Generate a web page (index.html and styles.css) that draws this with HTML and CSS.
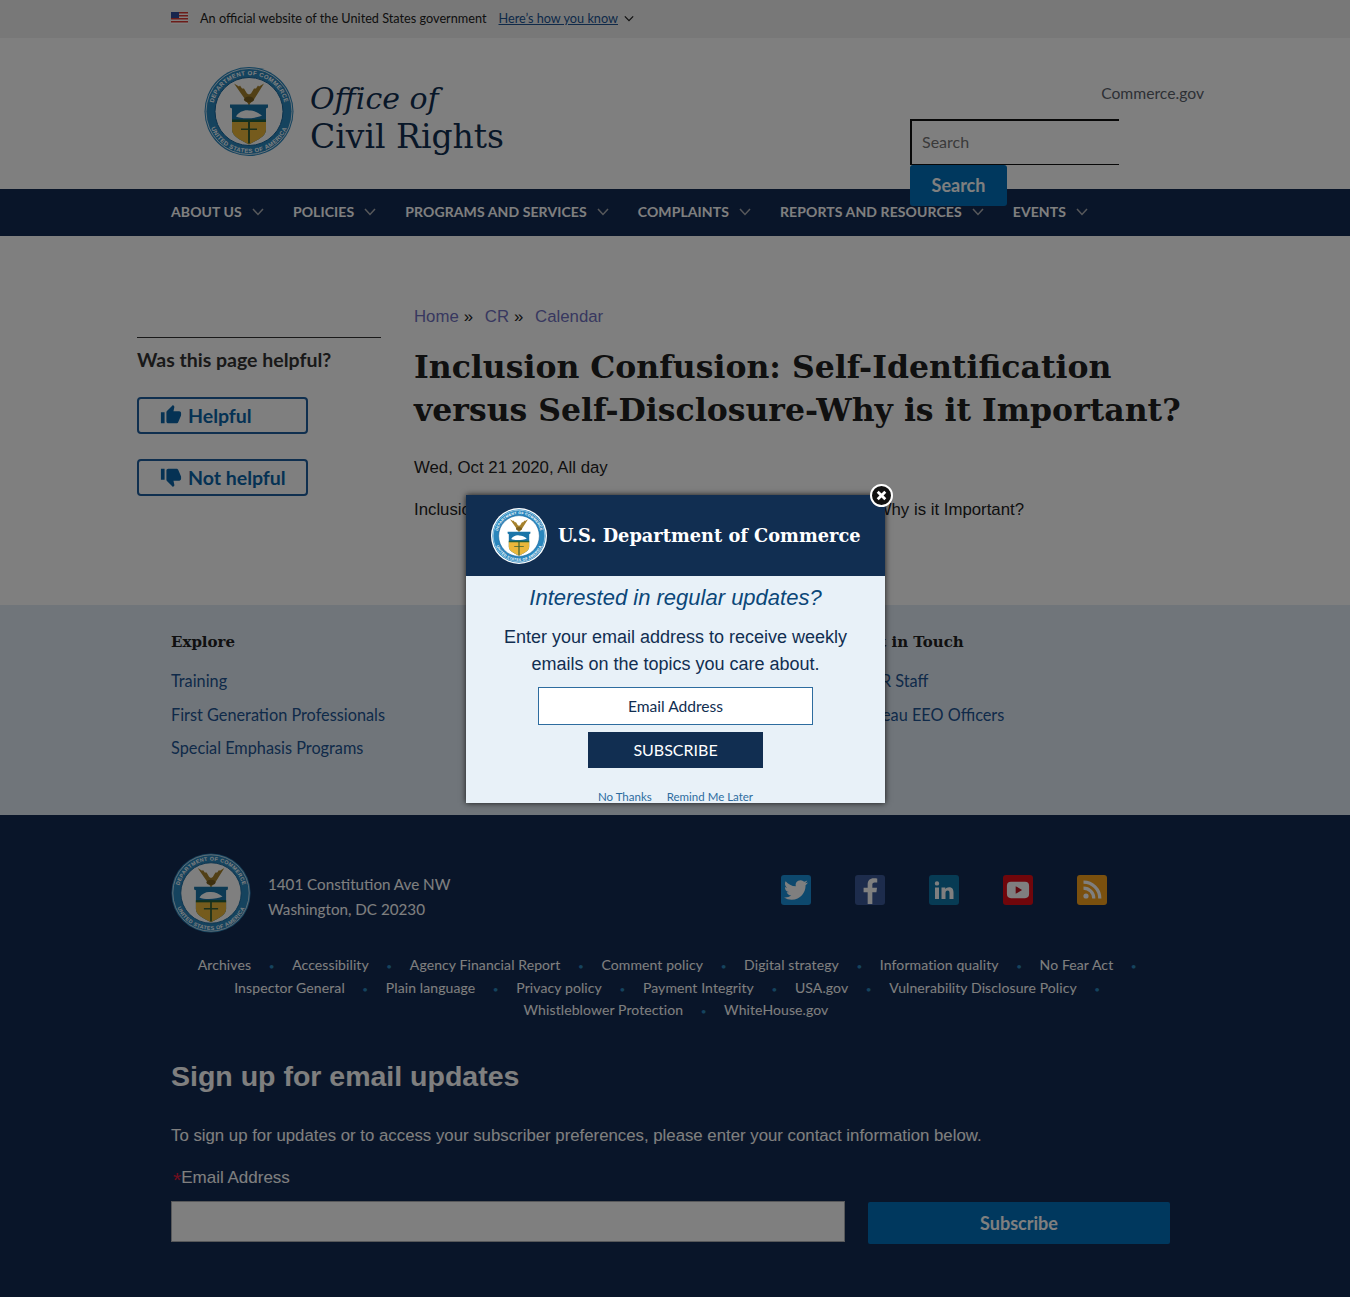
FILE: index.html
```html
<!DOCTYPE html>
<html lang="en">
<head>
    <meta charset="UTF-8">
    <meta name="viewport" content="width=device-width, initial-scale=1.0">
    <title>Inclusion Confusion | Office of Civil Rights</title>
    <link rel="stylesheet" href="styles.css">
</head>
<body>
    <svg class="defs" width="0" height="0">
        <defs>
            <path id="seal-top" d="M8.500 45a36.500 36.500 0 0 1 73 0"/>
            <path id="seal-bottom" d="M3.500 45a41.500 41.500 0 0 0 83 0"/>
        </defs>
        <symbol id="seal" viewBox="0 0 90 90">
            <circle cx="45" cy="45" r="44.500" fill="#2a86bd"/>
            <circle cx="45" cy="45" r="43" fill="none" stroke="#fff" stroke-width=".8"/>
            <circle cx="45" cy="45" r="34" fill="#fff"/>
            <circle cx="45" cy="45" r="34" fill="none" stroke="#17649a" stroke-width="1"/>
            <path d="M44 37 30 17l5 3 1-1 2 3 2 0 3 5 2 1 2-1 3-5 2 0 2-3 1 1 5-3-10 16-4 4-1 4z" fill="#a5812c"/>
            <ellipse cx="45" cy="33" rx="5" ry="3" fill="#7b5f1e"/>
            <path d="M26 38h38v3l-2 1v21c0 7-8 10-17 15-9-5-17-8-17-15V42l-2-1z" fill="#1b75a8"/>
            <path d="M28 54h34v9c0 7-8 10-17 15-9-5-17-8-17-15z" fill="#eab73b"/>
            <path d="M32 50c3-5 9-7 13-6 5 0 9 2 13 5-6 3-20 4-26 1z" fill="#fff"/>
            <path d="M28 53h34v2.500H28z" fill="#21603f"/>
            <path d="M44 55h2v22h-2zM37 62h16v1.500H37z" fill="#386136"/>
        </symbol>
    </svg>

    <section class="gov-banner">
        <svg class="flag" viewBox="0 0 17 12">
            <rect width="17" height="12" fill="#fff"/>
            <path d="M0 0h17v1.500H0zM0 3h17v1.500H0zM0 6h17v1.500H0zM0 9h17v1.500H0z" fill="#d83933"/>
            <rect width="8" height="6" fill="#2e4a9a"/>
        </svg>
        <span>An official website of the United States government</span>
        <a class="gov-link" href="#">Here’s how you know</a>
        <svg class="chevron chevron-small" viewBox="0 0 12 8"><path d="M1 1.500 6 6.500 11 1.500"/></svg>
    </section>

    <header class="site-header">
        <div class="brand">
            <svg class="brand-seal" viewBox="0 0 90 90">
                <use href="#seal"/>
                <text class="seal-text"><textPath href="#seal-top" startOffset="50%" text-anchor="middle">DEPARTMENT OF COMMERCE</textPath></text>
                <text class="seal-text"><textPath href="#seal-bottom" startOffset="50%" text-anchor="middle">UNITED STATES OF AMERICA</textPath></text>
            </svg>
            <div class="brand-name"><em>Office of</em><br>Civil Rights</div>
        </div>
        <div class="header-tools">
            <a class="commerce-link" href="#">Commerce.gov</a>
            <form class="search-form">
                <input class="search-input" type="text" placeholder="Search">
                <button class="search-button" type="button">Search</button>
            </form>
        </div>
    </header>

    <nav class="main-nav">
        <a href="#">About Us <svg class="chevron" viewBox="0 0 12 8"><path d="M1 1 6 6.500 11 1"/></svg></a>
        <a href="#">Policies <svg class="chevron" viewBox="0 0 12 8"><path d="M1 1 6 6.500 11 1"/></svg></a>
        <a href="#">Programs and Services <svg class="chevron" viewBox="0 0 12 8"><path d="M1 1 6 6.500 11 1"/></svg></a>
        <a href="#">Complaints <svg class="chevron" viewBox="0 0 12 8"><path d="M1 1 6 6.500 11 1"/></svg></a>
        <a href="#">Reports and Resources <svg class="chevron" viewBox="0 0 12 8"><path d="M1 1 6 6.500 11 1"/></svg></a>
        <a href="#">Events <svg class="chevron" viewBox="0 0 12 8"><path d="M1 1 6 6.500 11 1"/></svg></a>
    </nav>

    <main class="page-main">
        <aside class="feedback">
            <h2>Was this page helpful?</h2>
            <button class="feedback-button" type="button">
                <svg class="thumb" viewBox="0 0 24 24"><path d="M1 21h4V9H1v12zm22-11c0-1.100-.9-2-2-2h-6.310l.95-4.570.03-.32c0-.41-.17-.79-.44-1.060L14.170 1 7.590 7.590C7.220 7.950 7 8.450 7 9v10c0 1.100.9 2 2 2h9c.83 0 1.540-.5 1.840-1.220l3.020-7.050c.09-.23.14-.47.14-.73v-2z"/></svg>
                Helpful
            </button>
            <button class="feedback-button" type="button">
                <svg class="thumb thumb-down" viewBox="0 0 24 24"><path d="M15 3H6c-.83 0-1.540.5-1.840 1.220l-3.020 7.050c-.09.23-.14.47-.14.73v2c0 1.100.9 2 2 2h6.310l-.95 4.570-.03.32c0 .41.17.79.44 1.060L9.830 23l6.590-6.590c.36-.36.58-.86.58-1.410V5c0-1.100-.9-2-2-2zm4 0v12h4V3h-4z"/></svg>
                Not helpful
            </button>
        </aside>
        <article class="content">
            <div class="breadcrumb">
                <a href="#">Home</a><span class="crumb-sep">»</span>
                <a href="#">CR</a><span class="crumb-sep">»</span>
                <a href="#">Calendar</a>
            </div>
            <h1>Inclusion Confusion: Self-Identification versus Self-Disclosure-Why is it Important?</h1>
            <p class="event-date">Wed, Oct 21 2020, All day</p>
            <p class="event-text">Inclusion Confusion: Self-Identification versus Self-Disclosure-Why is it Important?</p>
        </article>
    </main>

    <section class="link-band">
        <div class="link-column">
            <h3>Explore</h3>
            <a href="#">Training</a>
            <a href="#">First Generation Professionals</a>
            <a href="#">Special Emphasis Programs</a>
        </div>
        <div class="link-column">
            <h3>Get in Touch</h3>
            <a href="#">OCR Staff</a>
            <a href="#">Bureau EEO Officers</a>
        </div>
    </section>

    <footer class="site-footer">
        <div class="footer-top">
            <div class="footer-address">
                <svg class="footer-seal" viewBox="0 0 90 90">
                    <use href="#seal"/>
                    <text class="seal-text"><textPath href="#seal-top" startOffset="50%" text-anchor="middle">DEPARTMENT OF COMMERCE</textPath></text>
                    <text class="seal-text"><textPath href="#seal-bottom" startOffset="50%" text-anchor="middle">UNITED STATES OF AMERICA</textPath></text>
                </svg>
                <address>1401 Constitution Ave NW<br>Washington, DC 20230</address>
            </div>
            <div class="social">
                <a class="social-icon twitter" href="#"><svg viewBox="0 0 24 24"><path d="M23.953 4.570a10 10 0 01-2.825.775 4.958 4.958 0 002.163-2.723c-.951.555-2.005.959-3.127 1.184a4.920 4.920 0 00-8.384 4.482C7.690 8.095 4.067 6.130 1.640 3.162a4.822 4.822 0 00-.666 2.475c0 1.710.870 3.213 2.188 4.096a4.904 4.904 0 01-2.228-.616v.060a4.923 4.923 0 003.946 4.827 4.996 4.996 0 01-2.212.085 4.936 4.936 0 004.604 3.417 9.867 9.867 0 01-6.102 2.105c-.390 0-.779-.023-1.170-.067a13.995 13.995 0 007.557 2.209c9.053 0 13.998-7.496 13.998-13.985 0-.210 0-.420-.015-.630A9.935 9.935 0 0024 4.590z"/></svg></a>
                <a class="social-icon facebook" href="#"><svg viewBox="0 0 24 24"><path d="M14 24V14h3.500l.5-4h-4V7.500C14 6.400 14.400 5.600 16 5.600h2.200V2.200C17.800 2.100 16.500 2 15.200 2 12 2 10 3.900 10 7.200V10H6.500v4H10v10z"/></svg></a>
                <a class="social-icon linkedin" href="#"><svg viewBox="0 0 24 24"><path d="M3 9.500h4V21H3zM5 3.200a2.200 2.200 0 1 1 0 4.400 2.200 2.200 0 0 1 0-4.400zM9.500 9.500h3.800v1.600c.6-1 1.900-1.900 3.800-1.900 3.400 0 4.400 2.100 4.400 5.400V21h-4v-5.800c0-1.500-.3-2.700-1.800-2.700s-2.200 1.100-2.200 2.700V21h-4z"/></svg></a>
                <a class="social-icon youtube" href="#"><svg viewBox="0 0 24 24"><rect x="2.500" y="5" width="19" height="14" rx="3.500"/><path class="play" d="M10 8.700 15.500 12 10 15.300z"/></svg></a>
                <a class="social-icon rss" href="#"><svg viewBox="0 0 24 24"><circle cx="6" cy="18" r="2.600"/><path class="rss-arc" d="M3.500 10.200a10.300 10.300 0 0 1 10.300 10.300M3.500 4.200a16.300 16.300 0 0 1 16.300 16.300"/></svg></a>
            </div>
        </div>
        <ul class="footer-links">
            <li><a href="#">Archives</a></li>
            <li><a href="#">Accessibility</a></li>
            <li><a href="#">Agency Financial Report</a></li>
            <li><a href="#">Comment policy</a></li>
            <li><a href="#">Digital strategy</a></li>
            <li><a href="#">Information quality</a></li>
            <li><a href="#">No Fear Act</a></li>
        </ul>
        <ul class="footer-links">
            <li><a href="#">Inspector General</a></li>
            <li><a href="#">Plain language</a></li>
            <li><a href="#">Privacy policy</a></li>
            <li><a href="#">Payment Integrity</a></li>
            <li><a href="#">USA.gov</a></li>
            <li><a href="#">Vulnerability Disclosure Policy</a></li>
        </ul>
        <ul class="footer-links">
            <li><a href="#">Whistleblower Protection</a></li>
            <li class="last"><a href="#">WhiteHouse.gov</a></li>
        </ul>
        <div class="signup">
            <h2>Sign up for email updates</h2>
            <p>To sign up for updates or to access your subscriber preferences, please enter your contact information below.</p>
            <label class="signup-label" for="signup-email"><span>*</span>Email Address</label>
            <div class="signup-row">
                <input class="signup-input" id="signup-email" type="text">
                <button class="signup-button" type="button">Subscribe</button>
            </div>
        </div>
    </footer>

    <div class="overlay"></div>
    <div class="modal">
        <button class="modal-close" type="button">
            <svg viewBox="0 0 12 12"><path d="M2.500 2.500 9.500 9.500M9.500 2.500 2.500 9.500"/></svg>
        </button>
        <div class="modal-head">
            <svg class="modal-seal" viewBox="0 0 90 90">
                <use href="#seal"/>
                <text class="seal-text"><textPath href="#seal-top" startOffset="50%" text-anchor="middle">DEPARTMENT OF COMMERCE</textPath></text>
                <text class="seal-text"><textPath href="#seal-bottom" startOffset="50%" text-anchor="middle">UNITED STATES OF AMERICA</textPath></text>
            </svg>
            <span>U.S. Department of Commerce</span>
        </div>
        <div class="modal-body">
            <div class="modal-title">Interested in regular updates?</div>
            <p>Enter your email address to receive weekly emails on the topics you care about.</p>
            <input class="modal-input" type="text" placeholder="Email Address">
            <button class="modal-button" type="button">SUBSCRIBE</button>
            <div class="modal-links"><a href="#">No Thanks</a><a href="#">Remind Me Later</a></div>
        </div>
    </div>
</body>
</html>
```

FILE: styles.css
```css
* {
    box-sizing: border-box;
}
html, body {
    margin: 0;
    padding: 0;
}
body {
    font-family: Lato, "Noto Sans", sans-serif;
    background-color: #fff;
    color: #212121;
    min-height: 1297px;
    position: relative;
    overflow-x: hidden;
}
a {
    text-decoration: none;
}
.defs {
    position: absolute;
}
.seal-text {
    font-family: "Liberation Sans", sans-serif;
    font-size: 6px;
    font-weight: bold;
    fill: #fff;
    letter-spacing: .4px;
}

/* gov banner */
.gov-banner {
    height: 38px;
    background-color: #f1f1f1;
    padding: 0 0 2px 171px;
    display: flex;
    align-items: center;
    font-size: 12.700px;
    color: #212121;
}
.flag {
    width: 17px;
    height: 12px;
    margin-right: 12px;
}
.gov-link {
    margin-left: 12px;
    color: #205493;
    text-decoration: underline;
}
.chevron {
    width: 12px;
    height: 8px;
    fill: none;
    stroke: #aeb0b5;
    stroke-width: 1.500;
    display: inline-block;
}
.chevron-small {
    width: 10px;
    height: 7px;
    margin-left: 6px;
    stroke: #212121;
}

/* header */
.site-header {
    height: 151px;
    padding-left: 204px;
    display: flex;
}
.brand {
    display: flex;
    align-items: flex-start;
    padding-top: 28px;
    width: 706px;
}
.brand-seal {
    width: 90px;
    height: 91px;
}
.brand-name {
    margin-left: 16px;
    margin-top: 13px;
    font-family: "DejaVu Serif", serif;
    font-size: 33px;
    line-height: 38px;
    color: #112e51;
}
.brand-name em {
    font-size: 30px;
}
.header-tools {
    width: 294px;
    padding-top: 45px;
}
.commerce-link {
    display: block;
    text-align: right;
    font-size: 15.700px;
    line-height: 20px;
    color: #5b616b;
}
.search-form {
    margin-top: 16px;
}
.search-input {
    display: block;
    width: 209px;
    height: 46px;
    padding: 0 10px 3px;
    border: 2px solid #111;
    border-right: 0;
    border-bottom-width: 1px;
    background: transparent;
    font-family: inherit;
    font-size: 16px;
}
.search-input::placeholder {
    color: #757575;
}
.search-button {
    position: relative;
    z-index: 1;
    display: block;
    width: 97px;
    height: 41px;
    padding: 0 0 2px;
    border: none;
    border-radius: 3px;
    background-color: #0071bc;
    color: #fff;
    font-family: inherit;
    font-size: 18px;
    font-weight: bold;
}

/* nav */
.main-nav {
    height: 47px;
    background-color: #132b53;
    padding: 0 0 2px 171px;
    display: flex;
    align-items: center;
    gap: 29px;
}
.main-nav a {
    color: #fff;
    font-size: 14px;
    font-weight: bold;
    letter-spacing: .1px;
    text-transform: uppercase;
    display: flex;
    align-items: center;
    gap: 10px;
}

/* main */
.page-main {
    height: 369px;
    padding-left: 137px;
    display: flex;
    gap: 33px;
}
.feedback {
    width: 244px;
    margin-top: 101px;
}
.feedback h2 {
    margin: 0 0 25px;
    padding-top: 9px;
    border-top: 1px solid #333;
    font-size: 19.500px;
    line-height: 25px;
    color: #333;
}
.feedback-button {
    display: flex;
    align-items: center;
    gap: 6px;
    width: 171px;
    height: 37px;
    margin-bottom: 25px;
    padding: 0 0 1px 21px;
    border: 2px solid #1f5f9e;
    border-radius: 4px;
    background: transparent;
    color: #0a65a8;
    font-family: inherit;
    font-size: 19.500px;
    font-weight: bold;
}
.thumb {
    width: 22px;
    height: 22px;
    fill: #0a65a8;
}
.thumb-down {
    transform: scaleX(-1);
}
.content {
    width: 790px;
    padding-top: 70px;
    font-family: "Liberation Sans", Arial, sans-serif;
}
.breadcrumb {
    font-size: 16.800px;
    line-height: 22px;
}
.breadcrumb a {
    color: #7070c0;
}
.crumb-sep {
    margin-left: 5px;
    margin-right: 7px;
}
.content h1 {
    margin: 17px 0 0;
    font-family: "DejaVu Serif", serif;
    font-size: 31.500px;
    line-height: 43px;
    color: #212121;
}
.event-date {
    margin: 27px 0 0;
    font-size: 16.800px;
    line-height: 20px;
}
.event-text {
    margin: 22px 0 0;
    font-size: 16.800px;
    line-height: 20px;
}

/* link band */
.link-band {
    height: 210px;
    background-color: #e0ebf5;
    padding: 26px 0 0 171px;
    display: flex;
}
.link-column {
    flex: 0 0 auto;
}
.link-column:first-child {
    width: 686px;
}
.link-column h3 {
    margin: 0 0 11px;
    font-family: "DejaVu Serif", serif;
    font-size: 15px;
    line-height: 22px;
    color: #212121;
}
.link-column a {
    display: block;
    font-size: 16.300px;
    line-height: 33.500px;
    color: #205493;
}

/* footer */
.site-footer {
    background-color: #132b53;
    min-height: 482px;
    padding: 38px 0 0 171px;
    color: #fff;
}
.footer-top {
    display: flex;
    width: 936px;
    justify-content: space-between;
}
.footer-address {
    display: flex;
    gap: 17px;
}
.footer-seal {
    width: 80px;
    height: 80px;
}
.footer-address address {
    font-style: normal;
    font-size: 15.200px;
    line-height: 25px;
    padding-top: 19px;
}
.social {
    display: flex;
    gap: 44px;
    padding-top: 22px;
}
.social-icon {
    width: 30px;
    height: 30px;
    border-radius: 3px;
    display: flex;
    align-items: center;
    justify-content: center;
}
.social-icon svg {
    width: 24px;
    height: 24px;
    fill: #fff;
}
.twitter {
    background-color: #1a91da;
}
.facebook {
    background-color: #3b5998;
}
.facebook svg {
    width: 28px;
    height: 28px;
}
.linkedin {
    background-color: #0e76a8;
}
.youtube {
    background-color: #e00d17;
}
.youtube svg {
    width: 28px;
    height: 28px;
}
.youtube .play {
    fill: #c4111b;
}
.rss {
    background-color: #f4a11c;
}
.rss-arc {
    fill: none;
    stroke: #fff;
    stroke-width: 3.200;
}
.footer-links {
    list-style: none;
    margin: 0;
    padding: 0;
    width: 1010px;
    height: 22.500px;
    display: flex;
    justify-content: center;
    font-size: 14px;
    letter-spacing: .1px;
    line-height: 22.500px;
}
.footer-top + .footer-links {
    margin-top: 21px;
}
.footer-links li {
    height: 22.500px;
}
.footer-links li::after {
    content: "•";
    display: inline-block;
    width: 41px;
    text-align: center;
    font-size: 10px;
    color: #2a86bd;
}
.footer-links li.last::after {
    content: none;
}
.footer-links a {
    color: #fff;
}
.signup {
    font-family: "Liberation Sans", Arial, sans-serif;
    padding-top: 32px;
}
.signup h2 {
    margin: 0;
    font-size: 28.500px;
    line-height: 44px;
}
.signup p {
    margin: 27px 0 0;
    font-size: 16.800px;
    line-height: 22px;
}
.signup-label {
    display: block;
    margin-top: 20px;
    font-size: 17px;
    line-height: 22px;
}
.signup-label span {
    color: #e31c3d;
    margin-left: 2px;
    font-size: 21px;
    line-height: 0;
    vertical-align: -4px;
}
.signup-row {
    display: flex;
    align-items: flex-start;
    gap: 23px;
    margin-top: 12px;
}
.signup-input {
    width: 674px;
    height: 41px;
    border: 1px solid #aeb0b5;
    background-color: #fff;
}
.signup-button {
    width: 302px;
    height: 42px;
    margin-top: 1px;
    border: none;
    border-radius: 2px;
    background-color: #0071bc;
    color: #fff;
    font-family: Lato, sans-serif;
    font-size: 18px;
    font-weight: bold;
}

/* popup */
.overlay {
    position: absolute;
    inset: 0;
    z-index: 10;
    background-color: rgba(0, 0, 0, 0.5);
}
.modal {
    position: absolute;
    z-index: 11;
    left: 466px;
    top: 495px;
    width: 419px;
    height: 308px;
    background-color: #e8f1f8;
    box-shadow: 0 0 6px rgba(0, 0, 0, 0.8);
}
.modal-close {
    position: absolute;
    top: -11px;
    right: -8px;
    width: 23px;
    height: 23px;
    padding: 3px;
    border: 2px solid #fff;
    border-radius: 50%;
    background-color: #111;
    display: flex;
}
.modal-close svg {
    fill: none;
    stroke: #fff;
    stroke-width: 2.600;
}
.modal-head {
    height: 81px;
    background-color: #112e51;
    padding-left: 25px;
    display: flex;
    align-items: center;
    gap: 11px;
    color: #fff;
    font-family: "DejaVu Serif", serif;
    font-size: 17.800px;
    font-weight: bold;
}
.modal-seal {
    width: 56px;
    height: 56px;
    border-radius: 50%;
    background-color: #fff;
    padding: 1px;
}
.modal-body {
    text-align: center;
    font-family: "Liberation Sans", Arial, sans-serif;
    color: #112e51;
}
.modal-title {
    padding-top: 9px;
    font-size: 22px;
    line-height: 26px;
    font-style: italic;
    color: #0b4778;
}
.modal-body p {
    margin: 13px auto 0;
    width: 360px;
    font-size: 18px;
    line-height: 27px;
}
.modal-input {
    display: block;
    width: 275px;
    height: 38px;
    margin: 9px auto 0;
    border: 1px solid #2d6c9f;
    background-color: #fff;
    text-align: center;
    font-family: Lato, sans-serif;
    font-size: 15.600px;
}
.modal-input::placeholder {
    color: #112e51;
    opacity: 1;
}
.modal-button {
    display: block;
    width: 175px;
    height: 36px;
    margin: 7px auto 0;
    padding: 0 0 2px;
    border: none;
    background-color: #112e51;
    color: #fff;
    font-family: Lato, sans-serif;
    font-size: 16px;
}
.modal-links {
    margin-top: 22px;
    display: flex;
    justify-content: center;
    gap: 15px;
    font-family: Lato, sans-serif;
    font-size: 11.500px;
    line-height: 14px;
}
.modal-links a {
    color: #2d6c9f;
}
```
